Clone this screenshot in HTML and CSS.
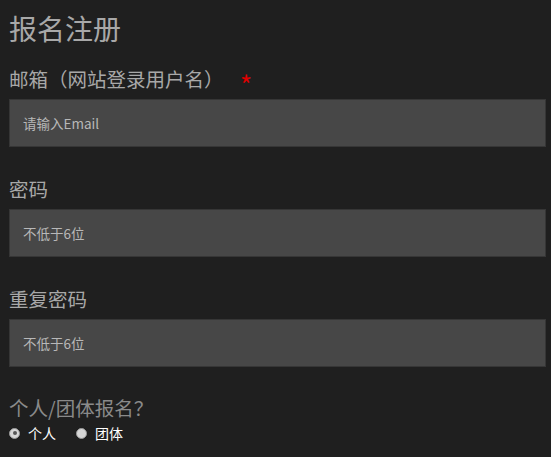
FILE: index.html
```html
<!DOCTYPE html>
<html lang="zh">
<head>
<meta charset="utf-8">
<link rel="stylesheet" href="styles.css">
</head>
<body>
<form class="form">
  <h1 class="title">报名注册</h1>
  <div class="group">
    <label class="label">邮箱（网站登录用户名） <span class="req">*</span></label>
    <input class="input" type="text" placeholder="请输入Email">
  </div>
  <div class="group">
    <label class="label">密码</label>
    <input class="input" type="password" placeholder="不低于6位">
  </div>
  <div class="group">
    <label class="label">重复密码</label>
    <input class="input" type="password" placeholder="不低于6位">
  </div>
  <div class="group">
    <label class="label label-dim">个人/团体报名？</label>
    <div class="radios">
      <label class="radio"><span class="dot checked"></span>个人</label>
      <label class="radio"><span class="dot"></span>团体</label>
    </div>
  </div>
</form>
</body>
</html>
```
FILE: styles.css
```css
html, body {
  margin: 0;
  padding: 0;
  background: #1f1f1f;
  font-family: "Noto Sans CJK SC", "Noto Sans", sans-serif;
}
.form {
  padding: 10px 5px 0 9px;
}
.title {
  margin: 0;
  font-size: 28px;
  font-weight: normal;
  line-height: 36px;
  color: #a8a8a8;
}
.group {
  display: flex;
  flex-direction: column;
}
.label {
  font-size: 19.5px;
  line-height: 26px;
  height: 26px;
  color: #a8a8a8;
  margin-top: 29px;
  margin-bottom: 7px;
}
.group:first-of-type .label { margin-top: 20px; }
.req {
  color: #e00000;
  font-size: 26px;
  line-height: 0;
  margin-left: 12px;
  vertical-align: -8px;
}
.label-dim {
  color: #8a8a8a;
  margin-top: 30px;
  margin-bottom: 0;
  line-height: 22px;
  height: 22px;
}
.input {
  box-sizing: border-box;
  height: 48px;
  width: 537px;
  margin: 0;
  padding: 0 13px;
  background: #474747;
  border: 1px solid #363636;
  font-family: "Noto Sans CJK SC", sans-serif;
  font-size: 13.5px;
  color: #ccc;
  outline: none;
}
.input::placeholder { color: #b8b8b8; }
.radios {
  display: flex;
  gap: 20px;
  align-items: center;
  margin-top: 5px;
}
.radio {
  display: flex;
  align-items: center;
  font-size: 14px;
  color: #fff;
  line-height: 18px;
}
.dot {
  box-sizing: border-box;
  width: 11px;
  height: 11px;
  border-radius: 50%;
  background: #d6d6d6;
  border: 1px solid #9a9a9a;
  margin-right: 8px;
  position: relative;
}
.dot.checked::after {
  content: "";
  position: absolute;
  left: 2.5px;
  top: 2.5px;
  width: 4px;
  height: 4px;
  border-radius: 50%;
  background: #555;
}
```
